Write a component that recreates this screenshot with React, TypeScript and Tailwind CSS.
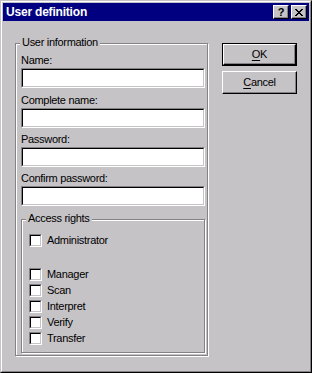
import React from "react";

function CloseGlyph() {
  const rows = ["xx....xx", ".xx..xx.", "..xxxx..", "...xx...", "..xxxx..", ".xx..xx.", "xx....xx"];
  const rects: React.ReactNode[] = [];
  rows.forEach((r, y) =>
    r.split("").forEach((c, x) => {
      if (c === "x") rects.push(<rect key={`${x}-${y}`} x={x} y={y} width={1} height={1} fill="#000" />);
    })
  );
  return (
    <svg width="8" height="7" viewBox="0 0 8 7" shapeRendering="crispEdges">
      {rects}
    </svg>
  );
}

function Field({ label, mt }: { label: string; mt: string }) {
  return (
    <div className={`flex flex-col ${mt}`}>
      <div className="h-[13px] leading-[13px] mb-[1px]">{label}</div>
      <div className="h-[20px] w-[184px] border border-t-[#848284] border-l-[#848284] border-r-white border-b-white">
        <div className="h-full w-full bg-white border border-t-black border-l-black border-r-[#c6c3c6] border-b-[#c6c3c6]" />
      </div>
    </div>
  );
}

function Check({ label }: { label: string }) {
  return (
    <div className="flex items-center h-[13px] gap-[5px]">
      <div className="h-[13px] w-[13px] border border-t-[#848284] border-l-[#848284] border-r-white border-b-white">
        <div className="h-full w-full bg-white border border-t-black border-l-black border-r-[#c6c3c6] border-b-[#c6c3c6]" />
      </div>
      <span className="leading-[13px]">{label}</span>
    </div>
  );
}

export default function App() {
  return (
    <div className="w-[312px] h-[373px] bg-[#c6c3c6] border border-t-[#c6c3c6] border-l-[#c6c3c6] border-r-black border-b-black font-['Liberation_Sans',Arial,sans-serif] text-[11px] text-black tracking-[-0.3px]">
      <div className="h-full border border-t-white border-l-white border-r-[#848284] border-b-[#848284] p-[1px] flex flex-col">
        <div className="h-[18px] bg-[#000080] flex items-center pl-[3px] pr-[2px]">
          <span className="text-white font-bold text-[12px] leading-[18px] tracking-[-0.2px] flex-1">User definition</span>
          <div className="flex gap-[2px]">
            <div className="w-[16px] h-[14px] bg-[#c6c3c6] border border-t-white border-l-white border-r-black border-b-black shadow-[inset_-1px_-1px_0_#848284] flex items-center justify-center">
              <span className="font-bold text-[11px] leading-[11px] tracking-normal">?</span>
            </div>
            <div className="w-[16px] h-[14px] bg-[#c6c3c6] border border-t-white border-l-white border-r-black border-b-black shadow-[inset_-1px_-1px_0_#848284] flex items-center justify-center">
              <CloseGlyph />
            </div>
          </div>
        </div>
        <div className="flex flex-1 pt-[22px] pl-[12px] gap-[14px]">
          <div className="relative w-[193px] h-[313px] border border-[#848284] shadow-[inset_1px_1px_0_#fff,1px_1px_0_#fff] pt-[10px] pl-[5px] pr-[2px] pb-[2px] flex flex-col">
            <span className="absolute left-[4px] top-[-8px] px-[2px] bg-[#c6c3c6] leading-[13px]">User information</span>
            <Field label="Name:" mt="mt-0" />
            <Field label="Complete name:" mt="mt-[6px]" />
            <Field label="Password:" mt="mt-[5px]" />
            <Field label="Confirm password:" mt="mt-[5px]" />
            <div className="relative mt-[13px] flex-1 w-[184px] border border-[#848284] shadow-[inset_1px_1px_0_#fff,1px_1px_0_#fff] pt-[14px] pl-[7px] flex flex-col gap-[3px]">
              <span className="absolute left-[4px] top-[-8px] px-[2px] bg-[#c6c3c6] leading-[13px]">Access rights</span>
              <Check label="Administrator" />
              <div className="h-[15px]" />
              <Check label="Manager" />
              <Check label="Scan" />
              <Check label="Interpret" />
              <Check label="Verify" />
              <Check label="Transfer" />
            </div>
          </div>
          <div className="flex flex-col gap-[5px]">
            <div className="w-[75px] h-[23px] border border-black">
              <div className="h-full w-full border border-t-white border-l-white border-r-black border-b-black shadow-[inset_-1px_-1px_0_#848284] flex items-center justify-center">
                <span className="leading-[13px]"><u className="underline-offset-[2px]">O</u>K</span>
              </div>
            </div>
            <div className="w-[75px] h-[23px] border border-t-white border-l-white border-r-black border-b-black shadow-[inset_-1px_-1px_0_#848284] flex items-center justify-center">
              <span className="leading-[13px]"><u className="underline-offset-[2px]">C</u>ancel</span>
            </div>
          </div>
        </div>
      </div>
    </div>
  );
}
